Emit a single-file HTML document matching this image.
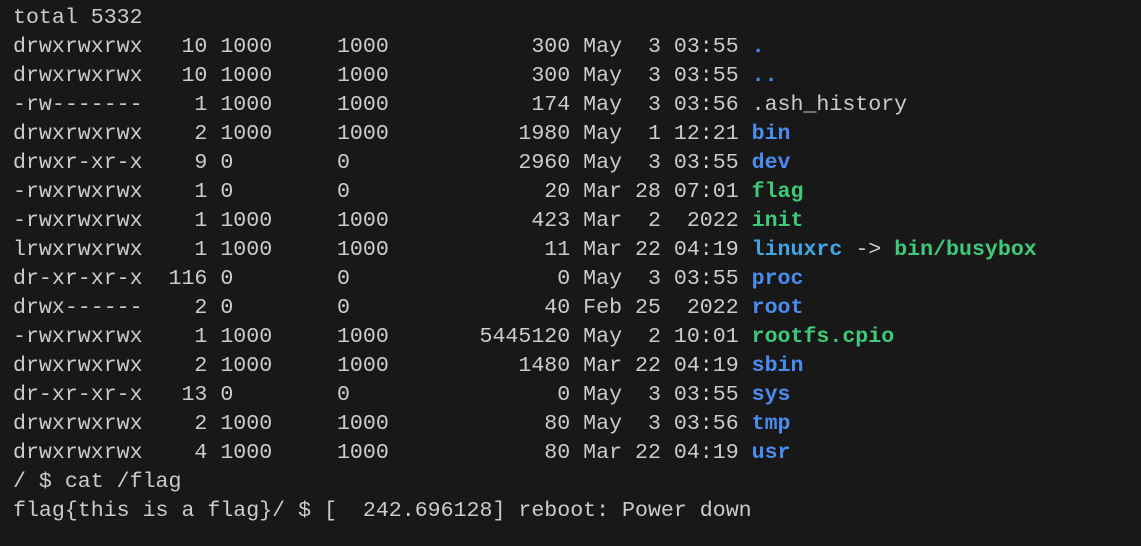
<!DOCTYPE html>
<html><head><meta charset="utf-8"><style>
html,body{margin:0;padding:0;background:#181818;width:1141px;height:546px;overflow:hidden}
pre{margin:0;position:absolute;left:13px;top:4px;font-family:"Liberation Mono",monospace;font-size:21.6px;line-height:29px;color:#cccccc}
.b{color:#4a8cf0;font-weight:bold}
.g{color:#3fc97a;font-weight:bold}
.c{color:#40a6e4;font-weight:bold}
</style></head><body><pre>total 5332
drwxrwxrwx   10 1000     1000           300 May  3 03:55 <span class="b">.</span>
drwxrwxrwx   10 1000     1000           300 May  3 03:55 <span class="b">..</span>
-rw-------    1 1000     1000           174 May  3 03:56 .ash_history
drwxrwxrwx    2 1000     1000          1980 May  1 12:21 <span class="b">bin</span>
drwxr-xr-x    9 0        0             2960 May  3 03:55 <span class="b">dev</span>
-rwxrwxrwx    1 0        0               20 Mar 28 07:01 <span class="g">flag</span>
-rwxrwxrwx    1 1000     1000           423 Mar  2  2022 <span class="g">init</span>
lrwxrwxrwx    1 1000     1000            11 Mar 22 04:19 <span class="c">linuxrc</span> -&gt; <span class="g">bin/busybox</span>
dr-xr-xr-x  116 0        0                0 May  3 03:55 <span class="b">proc</span>
drwx------    2 0        0               40 Feb 25  2022 <span class="b">root</span>
-rwxrwxrwx    1 1000     1000       5445120 May  2 10:01 <span class="g">rootfs.cpio</span>
drwxrwxrwx    2 1000     1000          1480 Mar 22 04:19 <span class="b">sbin</span>
dr-xr-xr-x   13 0        0                0 May  3 03:55 <span class="b">sys</span>
drwxrwxrwx    2 1000     1000            80 May  3 03:56 <span class="b">tmp</span>
drwxrwxrwx    4 1000     1000            80 Mar 22 04:19 <span class="b">usr</span>
/ $ cat /flag
flag{this is a flag}/ $ [  242.696128] reboot: Power down</pre></body></html>
